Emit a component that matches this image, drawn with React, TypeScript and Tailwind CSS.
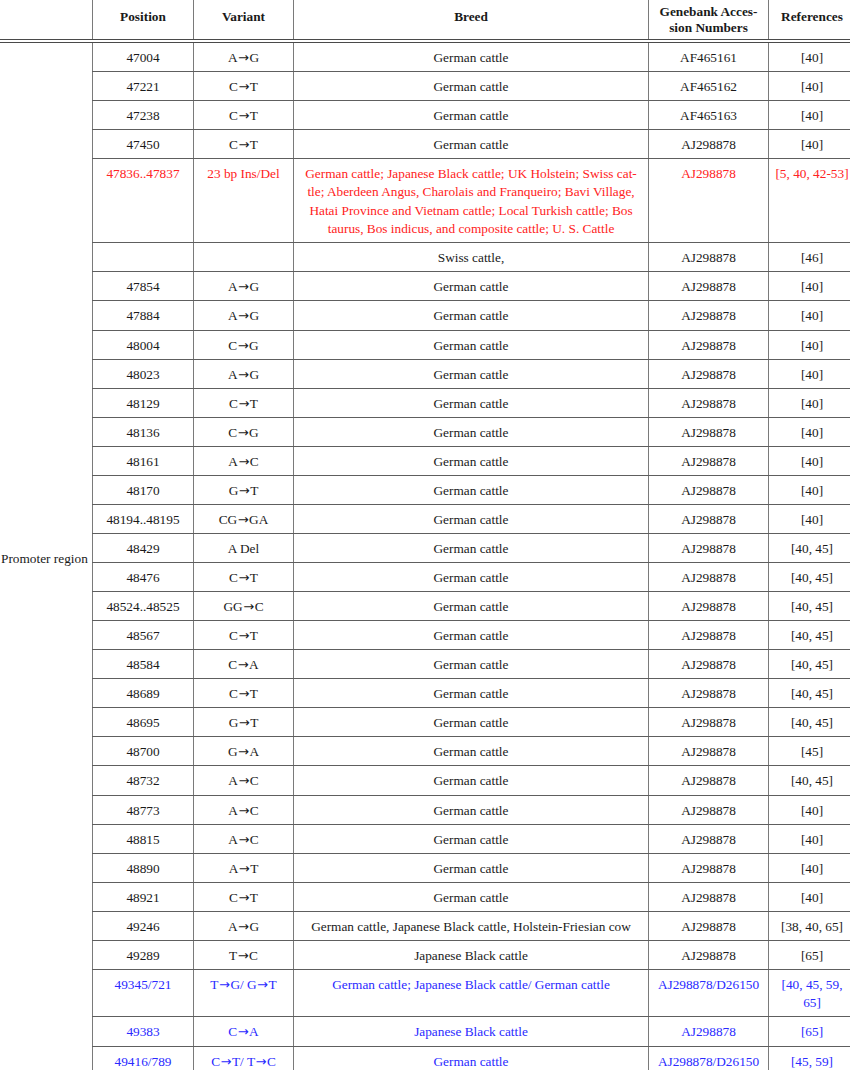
import React from "react";

type Row = {
    pos: string;
    v: string;
    breed: React.ReactNode;
    acc: string;
    ref: React.ReactNode;
    tone?: "red" | "blue";
};

const gc = "German cattle";

const rows: Row[] = [
    { pos: "47004", v: "A→G", breed: gc, acc: "AF465161", ref: "[40]" },
    { pos: "47221", v: "C→T", breed: gc, acc: "AF465162", ref: "[40]" },
    { pos: "47238", v: "C→T", breed: gc, acc: "AF465163", ref: "[40]" },
    { pos: "47450", v: "C→T", breed: gc, acc: "AJ298878", ref: "[40]" },
    {
        pos: "47836..47837",
        v: "23 bp Ins/Del",
        breed: (
            <>
                German cattle; Japanese Black cattle; UK Holstein; Swiss cat-
                <br />
                tle; Aberdeen Angus, Charolais and Franqueiro; Bavi Village,
                <br />
                Hatai Province and Vietnam cattle; Local Turkish cattle; Bos
                <br />
                taurus, Bos indicus, and composite cattle; U. S. Cattle
            </>
        ),
        acc: "AJ298878",
        ref: "[5, 40, 42-53]",
        tone: "red",
    },
    { pos: "", v: "", breed: "Swiss cattle,", acc: "AJ298878", ref: "[46]" },
    { pos: "47854", v: "A→G", breed: gc, acc: "AJ298878", ref: "[40]" },
    { pos: "47884", v: "A→G", breed: gc, acc: "AJ298878", ref: "[40]" },
    { pos: "48004", v: "C→G", breed: gc, acc: "AJ298878", ref: "[40]" },
    { pos: "48023", v: "A→G", breed: gc, acc: "AJ298878", ref: "[40]" },
    { pos: "48129", v: "C→T", breed: gc, acc: "AJ298878", ref: "[40]" },
    { pos: "48136", v: "C→G", breed: gc, acc: "AJ298878", ref: "[40]" },
    { pos: "48161", v: "A→C", breed: gc, acc: "AJ298878", ref: "[40]" },
    { pos: "48170", v: "G→T", breed: gc, acc: "AJ298878", ref: "[40]" },
    { pos: "48194..48195", v: "CG→GA", breed: gc, acc: "AJ298878", ref: "[40]" },
    { pos: "48429", v: "A Del", breed: gc, acc: "AJ298878", ref: "[40, 45]" },
    { pos: "48476", v: "C→T", breed: gc, acc: "AJ298878", ref: "[40, 45]" },
    { pos: "48524..48525", v: "GG→C", breed: gc, acc: "AJ298878", ref: "[40, 45]" },
    { pos: "48567", v: "C→T", breed: gc, acc: "AJ298878", ref: "[40, 45]" },
    { pos: "48584", v: "C→A", breed: gc, acc: "AJ298878", ref: "[40, 45]" },
    { pos: "48689", v: "C→T", breed: gc, acc: "AJ298878", ref: "[40, 45]" },
    { pos: "48695", v: "G→T", breed: gc, acc: "AJ298878", ref: "[40, 45]" },
    { pos: "48700", v: "G→A", breed: gc, acc: "AJ298878", ref: "[45]" },
    { pos: "48732", v: "A→C", breed: gc, acc: "AJ298878", ref: "[40, 45]" },
    { pos: "48773", v: "A→C", breed: gc, acc: "AJ298878", ref: "[40]" },
    { pos: "48815", v: "A→C", breed: gc, acc: "AJ298878", ref: "[40]" },
    { pos: "48890", v: "A→T", breed: gc, acc: "AJ298878", ref: "[40]" },
    { pos: "48921", v: "C→T", breed: gc, acc: "AJ298878", ref: "[40]" },
    {
        pos: "49246",
        v: "A→G",
        breed: "German cattle, Japanese Black cattle, Holstein-Friesian cow",
        acc: "AJ298878",
        ref: "[38, 40, 65]",
    },
    { pos: "49289", v: "T→C", breed: "Japanese Black cattle", acc: "AJ298878", ref: "[65]" },
    {
        pos: "49345/721",
        v: "T→G/ G→T",
        breed: "German cattle; Japanese Black cattle/ German cattle",
        acc: "AJ298878/D26150",
        ref: (
            <>
                [40, 45, 59,
                <br />
                65]
            </>
        ),
        tone: "blue",
    },
    { pos: "49383", v: "C→A", breed: "Japanese Black cattle", acc: "AJ298878", ref: "[65]", tone: "blue" },
    { pos: "49416/789", v: "C→T/ T→C", breed: gc, acc: "AJ298878/D26150", ref: "[45, 59]", tone: "blue" },
];

// the serif's own arrow is tiny and loose, so swap in a tighter one
function Variant({ text }: { text: string }) {
    const parts = text.split("→");
    return (
        <>
            {parts.map((p, i) => (
                <React.Fragment key={i}>
                    {i > 0 && (
                        <span className="inline-block mx-[0.5px] font-['DejaVu_Sans',sans-serif] text-[13px] leading-none">
                            →
                        </span>
                    )}
                    {p}
                </React.Fragment>
            ))}
        </>
    );
}

const cell = "border-l border-[#7a7a7a] text-center pt-[6px] pb-[3.57px] leading-[18.5px]";

function DataRow({ row }: { row: Row }) {
    const tone =
        row.tone === "red" ? "text-[#f22]" : row.tone === "blue" ? "text-[#2a2aff]" : "text-[#1a1a1a]";
    return (
        <div className={`flex border-b border-[#5e5e5e] ${tone}`}>
            <div className={`${cell} w-[101px]`}>{row.pos}</div>
            <div className={`${cell} w-[100px]`}>
                <Variant text={row.v} />
            </div>
            <div className={`${cell} w-[355px]`}>{row.breed}</div>
            <div className={`${cell} w-[120px]`}>{row.acc}</div>
            <div className={`${cell} w-[87px]`}>{row.ref}</div>
        </div>
    );
}

export default function App() {
    const head = "border-l border-[#7a7a7a] text-center font-bold leading-[15.5px]";
    return (
        <div className="w-[850px] h-[1070px] overflow-hidden bg-white font-['Liberation_Serif',serif] text-[13.3px] text-[#1a1a1a]">
            <div className="w-[855px]">
                {/* header */}
                <div className="flex h-[39px]">
                    <div className="w-[92px]" />
                    <div className={`${head} w-[101px] pt-[9px]`}>Position</div>
                    <div className={`${head} w-[100px] pt-[9px]`}>Variant</div>
                    <div className={`${head} w-[355px] pt-[9px]`}>Breed</div>
                    <div className={`${head} w-[120px] pt-[4px]`}>
                        Genebank Acces-
                        <br />
                        sion Numbers
                    </div>
                    <div className={`${head} w-[87px] pt-[9px]`}>References</div>
                </div>
                <div className="h-[3.5px] border-y border-[#4a4a4a]" />

                {/* body */}
                <div className="flex">
                    <div className="w-[92px] pt-[507px] pl-[1px] leading-[18.5px] whitespace-nowrap">
                        Promoter region
                    </div>
                    <div className="flex flex-col">
                        {rows.map((r, i) => (
                            <DataRow key={i} row={r} />
                        ))}
                    </div>
                </div>
            </div>
        </div>
    );
}
